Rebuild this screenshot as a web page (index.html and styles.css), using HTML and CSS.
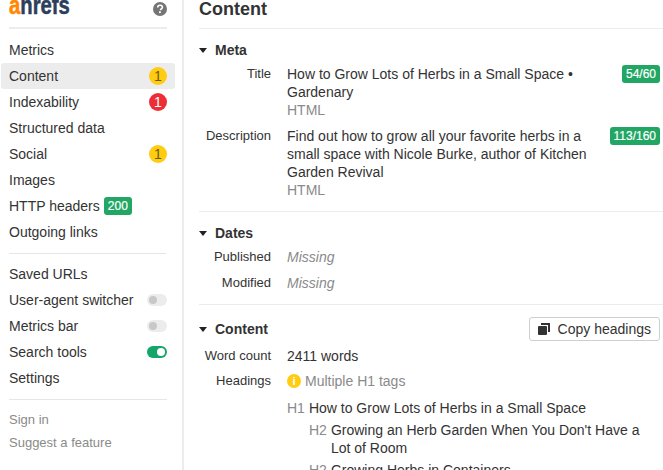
FILE: index.html
```html
<!DOCTYPE html>
<html lang="en">
<head>
  <meta charset="UTF-8" />
  <title>Ahrefs SEO toolbar</title>
  <link rel="stylesheet" href="styles.css">
</head>
<body>
  <div class="app">
    <aside class="sidebar">
      <div class="brand">
        <span class="logo"><span class="logo-a">a</span>hrefs</span>
        <svg class="help" width="14" height="14" viewBox="0 0 14 14">
          <circle cx="7" cy="7" r="7" fill="#757575"/>
          <path d="M4.700 5.400c0-1.400 1-2.200 2.400-2.200 1.300 0 2.300.8 2.300 2 0 1-.6 1.400-1.200 1.800-.5.3-.7.6-.7 1.200" fill="none" stroke="#fff" stroke-width="1.600"/>
          <rect x="6" y="9.300" width="1.800" height="1.800" fill="#fff"/>
        </svg>
      </div>

      <nav class="nav">
        <a class="nav-item">Metrics</a>
        <a class="nav-item active">Content <span class="dot yellow">1</span></a>
        <a class="nav-item">Indexability <span class="dot red">1</span></a>
        <a class="nav-item">Structured data</a>
        <a class="nav-item">Social <span class="dot yellow">1</span></a>
        <a class="nav-item">Images</a>
        <a class="nav-item">HTTP headers <span class="tag tag-inline">200</span></a>
        <a class="nav-item">Outgoing links</a>
      </nav>

      <nav class="nav nav-tools">
        <a class="nav-item">Saved URLs</a>
        <a class="nav-item">User-agent switcher <span class="switch"></span></a>
        <a class="nav-item">Metrics bar <span class="switch"></span></a>
        <a class="nav-item">Search tools <span class="switch on"></span></a>
        <a class="nav-item">Settings</a>
      </nav>

      <div class="nav-foot">
        <a>Sign in</a>
        <a>Suggest a feature</a>
      </div>
    </aside>

    <main class="main">
      <h1 class="page-title">Content</h1>

      <section class="section section-meta">
        <h2 class="section-head"><span class="caret"></span>Meta</h2>
        <div class="row">
          <div class="label">Title</div>
          <div class="value">How to Grow Lots of Herbs in a Small Space • Gardenary<div class="muted">HTML</div></div>
          <span class="tag">54/60</span>
        </div>
        <div class="row row-next">
          <div class="label">Description</div>
          <div class="value">Find out how to grow all your favorite herbs in a small space with Nicole Burke, author of Kitchen Garden Revival<div class="muted">HTML</div></div>
          <span class="tag">113/160</span>
        </div>
      </section>

      <section class="section section-dates">
        <h2 class="section-head"><span class="caret"></span>Dates</h2>
        <div class="row">
          <div class="label">Published</div>
          <div class="value missing">Missing</div>
        </div>
        <div class="row row-next">
          <div class="label">Modified</div>
          <div class="value missing">Missing</div>
        </div>
      </section>

      <section class="section section-content">
        <div class="head-bar">
          <h2 class="section-head"><span class="caret"></span>Content</h2>
          <button class="copy-btn">
            <svg width="12" height="12" viewBox="0 0 12 12" fill="#333">
              <path d="M3 0h9v9h-2V2H3z"/>
              <rect x="0" y="3" width="9" height="9" rx="1"/>
            </svg>
            Copy headings
          </button>
        </div>
        <div class="row">
          <div class="label">Word count</div>
          <div class="value">2411 words</div>
        </div>
        <div class="row row-headings">
          <div class="label">Headings</div>
          <div class="value warn">
            <span class="warn-icon">i</span>Multiple H1 tags
          </div>
        </div>
        <div class="headings">
          <div class="h-line"><span class="h-tag">H1</span><span>How to Grow Lots of Herbs in a Small Space</span></div>
          <div class="h-line sub"><span class="h-tag">H2</span><span>Growing an Herb Garden When You Don't Have a Lot of Room</span></div>
          <div class="h-line sub"><span class="h-tag">H2</span><span>Growing Herbs in Containers</span></div>
        </div>
      </section>
    </main>
  </div>
</body>
</html>
```

FILE: styles.css
```css
* {
  box-sizing: border-box;
}

html, body {
  height: 100%;
  margin: 0;
  overflow: hidden;
}

body {
  background-color: white;
  color: #333;
  font-family: "Liberation Sans", Arial, sans-serif;
  font-size: 14px;
  line-height: 18px;
}

.app {
  display: flex;
  height: 470px;
  overflow: hidden;
}

/* Sidebar */
.sidebar {
  flex: 0 0 184px;
  border-right: 2px solid #ececec;
  padding-right: 7px;
}

.brand {
  display: flex;
  justify-content: space-between;
  height: 29px;
  margin-left: 9px;
  margin-right: 8px;
  border-bottom: 2px solid #ececec;
  overflow: hidden;
}

.logo {
  margin-top: -7px;
  color: #2c3e5b;
  font-size: 25px;
  font-weight: bold;
  line-height: 25px;
  -webkit-text-stroke: 0.5px currentColor;
  transform: scaleX(0.81);
  transform-origin: left;
}

.logo-a {
  color: #ff8800;
}

.help {
  margin-top: 2px;
}

.nav {
  margin: 8px 0 0 1px;
}

.nav-item {
  display: flex;
  justify-content: space-between;
  align-items: center;
  height: 26px;
  padding: 0 8px;
  border-radius: 3px;
}

.nav-item.active {
  background-color: #ececec;
}

.nav-item .tag-inline {
  margin-right: auto;
  margin-left: 4px;
}

.nav-tools::before {
  content: "";
  display: block;
  height: 1px;
  margin: 0 9px 7px 8px;
  background-color: #e6e6e6;
}

.nav-foot {
  margin: 8px 8px 0 9px;
  padding-top: 11px;
  border-top: 1px solid #e6e6e6;
  color: #8a8a8a;
  font-size: 13px;
}

.nav-foot a {
  display: block;
  height: 23px;
}

.dot {
  width: 18px;
  height: 18px;
  border-radius: 50%;
  font-size: 14px;
  line-height: 18px;
  text-align: center;
}

.yellow {
  background-color: #ffcc11;
  color: #6b5a14;
}

.red {
  background-color: #ee2e36;
  color: white;
}

.tag {
  flex: none;
  height: 18px;
  padding: 0 4px;
  border-radius: 3px;
  background-color: #21a663;
  color: white;
  font-size: 12px;
  line-height: 18px;
  -webkit-text-stroke: 0.2px white;
}

.switch {
  position: relative;
  width: 20px;
  height: 12px;
  border-radius: 6px;
  background-color: #ececec;
}

.switch::after {
  content: "";
  position: absolute;
  top: 2px;
  left: 2px;
  width: 8px;
  height: 8px;
  border-radius: 50%;
  background-color: #c8c8c8;
}

.switch.on {
  background-color: #12a66a;
}

.switch.on::after {
  left: 10px;
  background-color: white;
}

/* Main column */
.main {
  flex: 1;
  min-width: 0;
  padding-left: 15px;
}

.page-title {
  height: 29px;
  margin: 0;
  border-bottom: 1px solid #ececec;
  font-size: 18px;
  line-height: 18px;
}

.section {
  padding-right: 3px;
  border-bottom: 1px solid #ececec;
}

.section-meta {
  padding-top: 12px;
  padding-bottom: 12px;
}

.section-dates {
  padding-top: 12px;
  padding-bottom: 12px;
}

.section-content {
  padding-top: 12px;
  border-bottom: 0;
}

.section-head {
  display: flex;
  align-items: center;
  margin: 0;
  font-size: 14px;
  line-height: 18px;
}

.caret {
  width: 0;
  height: 0;
  margin-right: 8px;
  border-left: 4px solid transparent;
  border-right: 4px solid transparent;
  border-top: 5px solid #222;
}

.row {
  display: flex;
  align-items: flex-start;
  margin-top: 6px;
}

.row-next {
  margin-top: 8px;
}

.label {
  flex: 0 0 72px;
  font-size: 13px;
  text-align: right;
}

.value {
  flex: 1;
  min-width: 0;
  margin-left: 16px;
  padding-right: 22px;
}

.muted {
  color: #8a8a8a;
}

.missing {
  color: #8a8a8a;
  font-style: italic;
}

.head-bar {
  display: flex;
  justify-content: space-between;
  align-items: center;
}

.copy-btn {
  display: flex;
  align-items: center;
  gap: 8px;
  height: 24px;
  padding: 0 8px;
  border: 1px solid #cfcfcf;
  border-radius: 3px;
  background-color: white;
  color: #333;
  font-family: inherit;
  font-size: 14px;
}

.row-headings {
  margin-top: 7px;
}

.warn {
  display: flex;
  align-items: center;
  color: #8a8a8a;
}

.warn-icon {
  width: 14px;
  height: 14px;
  margin-right: 4px;
  border-radius: 50%;
  background-color: #ffcc11;
  color: white;
  font-size: 11px;
  font-weight: bold;
  line-height: 14px;
  text-align: center;
}

.headings {
  margin: 9px 0 0 88px;
}

.h-line {
  display: flex;
  gap: 4px;
}

.h-line.sub {
  margin-top: 4px;
  margin-left: 22px;
}

.h-tag {
  color: #8a8a8a;
}
```
